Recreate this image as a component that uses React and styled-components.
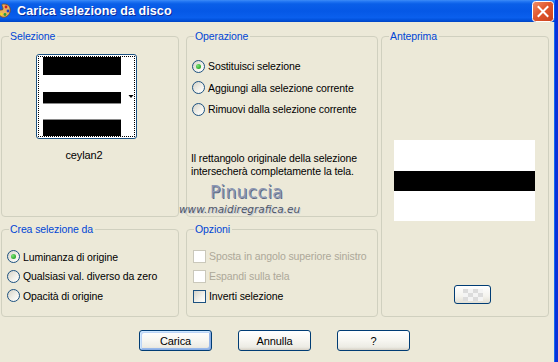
import React from 'react';
import styled, { createGlobalStyle, css } from 'styled-components';

const Global = createGlobalStyle`
  html, body { margin: 0; padding: 0; background: #ECE9D8; }
  body { font-family: "Liberation Sans", Arial, sans-serif; font-size: 10.5px; letter-spacing: -0.1px; color: #000; }
  * { box-sizing: border-box; }
`;

const Window = styled.div`
  position: relative;
  width: 558px;
  height: 362px;
  background: #ECE9D8;
  border-right: 3px solid #0831D9;
  box-shadow: inset -1px 0 0 #166AEE;
  display: flex;
  flex-direction: column;
  overflow: hidden;
`;

const TitleBar = styled.div`
  height: 22px;
  flex: none;
  display: flex;
  align-items: center;
  background: linear-gradient(to bottom, #3D8CF7 0%, #1F73F2 8%, #0A5FE8 18%, #0558E6 50%, #0A5FED 80%, #0050DA 92%, #0044C4 100%);
`;

const TitleIcon = styled.svg`
  flex: none;
  width: 14px;
  height: 16px;
  margin-left: -3px;
`;

const TitleText = styled.div`
  margin-left: 6px;
  font-family: "Liberation Sans", Arial, sans-serif;
  font-weight: bold;
  font-size: 12.5px;
  letter-spacing: 0.1px;
  color: #fff;
  text-shadow: 1px 1px 0 #0A2A9A;
`;

const CloseButton = styled.svg`
  flex: none;
  display: block;
  margin-left: auto;
  margin-right: 1px;
  width: 22px;
  height: 21px;
`;

const Body = styled.div`
  flex: 1;
  display: flex;
  flex-direction: column;
  padding: 14px 0 0 1px;
`;

const Grid = styled.div`
  display: grid;
  grid-template-columns: 182px 192px 168px;
  grid-template-rows: 181px 88px;
  column-gap: 3px;
  row-gap: 12px;
`;

const Group = styled.div`
  position: relative;
  border: 1px solid #D0D0BF;
  border-radius: 4px;
  width: ${p => p.$w}px;
  grid-column: ${p => p.$col};
  grid-row: ${p => p.$row};
  display: flex;
  flex-direction: column;
  align-items: flex-start;
  padding: ${p => p.$pad || '0'};
`;

const Legend = styled.div`
  position: absolute;
  top: -7px;
  left: 7px;
  padding: 0 2px 0 1px;
  line-height: 13px;
  background: #ECE9D8;
  color: #0046D5;
`;

const ThumbCol = styled.div`
  display: flex;
  flex-direction: column;
  align-items: center;
  width: 101px;
`;

const Thumb = styled.div`
  position: relative;
  width: 101px;
  height: 85px;
  border: 1px solid #1C5180;
  border-radius: 3px;
  background: #fff;
`;

const FocusRect = styled.div`
  position: absolute;
  inset: 1px;
  border: 1px dotted #000;
`;

const ThumbName = styled.div`
  margin-top: 10px;
  margin-right: 5px;
  font-size: 11px;
  line-height: 13px;
`;

const RadioList = styled.div`
  display: flex;
  flex-direction: column;
  margin-top: ${p => p.$top}px;
`;

const Row = styled.div`
  display: flex;
  align-items: center;
  height: ${p => p.$h}px;
  gap: 3px;
  color: ${p => (p.$disabled ? '#ACA899' : '#000')};
  white-space: nowrap;
`;

const RadioDot = styled.span`
  position: relative;
  flex: none;
  width: 13px;
  height: 13px;
  border-radius: 50%;
  border: 1px solid #1C5180;
  background: linear-gradient(135deg, #D6D3C8 0%, #F3F2EC 60%, #FFFFFF 100%);
  ${p => p.$on && css`
    &::after {
      content: '';
      position: absolute;
      left: 3px;
      top: 3px;
      width: 5px;
      height: 5px;
      border-radius: 50%;
      background: radial-gradient(circle at 35% 35%, #7BE477 0%, #21A121 80%);
    }
  `}
`;

const CheckBox = styled.span`
  flex: none;
  width: 13px;
  height: 13px;
  border: 1px solid ${p => (p.$disabled ? '#CAC8BB' : '#1C5180')};
  background: ${p => (p.$disabled ? '#FFFFFF' : 'linear-gradient(135deg, #D6D3C8 0%, #F3F2EC 60%, #FFFFFF 100%)')};
`;

const Note = styled.div`
  margin-top: 32px;
  margin-left: -1px;
  line-height: 12.5px;
`;

const Preview = styled.div`
  margin-top: 103px;
  margin-left: 12px;
  width: 141px;
  height: 81px;
  background: #fff;
  display: flex;
  flex-direction: column;
  padding-top: 31px;
`;

const PreviewBand = styled.div`
  height: 20px;
  background: #000;
`;

const SmallButton = styled.div`
  margin-top: 64px;
  margin-left: 72px;
  width: 37px;
  height: 19px;
  border: 1px solid #003C74;
  border-radius: 3px;
  background: linear-gradient(to bottom, #FFFFFF 0%, #F4F3EE 60%, #E2DFD4 100%);
  display: flex;
  align-items: center;
  justify-content: center;
`;

const Footer = styled.div`
  display: flex;
  justify-content: center;
  gap: 26px;
  margin-top: 13px;
  padding-right: 7px;
`;

const Button = styled.div`
  width: 73px;
  height: 21px;
  border: 1px solid #003C74;
  border-radius: 3px;
  font-size: 11px;
  background: linear-gradient(to bottom, #FFFFFF 0%, #F7F6F1 50%, #ECEBE4 85%, #D6D0C5 100%);
  display: flex;
  align-items: center;
  justify-content: center;
  ${p => p.$default && css`
    box-shadow: inset 1px 1px 0 #CEE7FF, inset -1px -1px 0 #89ADE4, inset 2px 2px 0 #BCD4F6, inset -2px -2px 0 #98B8EA;
  `}
`;

const Watermark = styled.div`
  position: absolute;
  left: 179px;
  top: 181px;
  display: flex;
  flex-direction: column;
  align-items: flex-start;
  pointer-events: none;
`;

const WmName = styled.div`
  margin-left: 31px;
  font-family: "DejaVu Sans", Verdana, sans-serif;
  font-size: 17px;
  line-height: 22px;
  letter-spacing: 0.4px;
  color: #8C98B4;
  text-shadow: 1px 1px 0 #5E6A86;
`;

const WmSite = styled.div`
  font-family: "DejaVu Sans", Verdana, sans-serif;
  font-style: italic;
  font-size: 10.5px;
  line-height: 12px;
  letter-spacing: 0;
  color: #4E5668;
  text-shadow: 1px 1px 0 #C8CCD6;
`;

function Radio({ on, label, h }) {
  return (
    <Row $h={h}>
      <RadioDot $on={on} />
      <span>{label}</span>
    </Row>
  );
}

function Check({ disabled, label }) {
  return (
    <Row $h={20} $disabled={disabled}>
      <CheckBox $disabled={disabled} />
      <span>{label}</span>
    </Row>
  );
}

export default function App() {
  return (
    <>
      <Global />
      <Window>
        <TitleBar>
          <TitleIcon viewBox="0 0 14 16">
            <path d="M7 1 C12 1 14 5 13 9 C12 13 8 15 5 14 C2 13 1 10 2 8 C3 6 6 8 6 6 C6 3 3 1 7 1 Z" fill="#E8B060" stroke="#7A4A18" strokeWidth="0.8" />
            <circle cx="9" cy="4" r="1.4" fill="#D02020" />
            <circle cx="11" cy="8" r="1.4" fill="#2040D0" />
            <circle cx="8" cy="11.5" r="1.4" fill="#20A040" />
            <circle cx="4.5" cy="11" r="1.2" fill="#F0E020" />
          </TitleIcon>
          <TitleText>Carica selezione da disco</TitleText>
          <CloseButton viewBox="0 0 22 21">
            <defs>
              <linearGradient id="closeFill" x1="0" y1="0" x2="1" y2="1">
                <stop offset="0" stopColor="#F0906C" />
                <stop offset="0.45" stopColor="#E2582E" />
                <stop offset="1" stopColor="#C8401C" />
              </linearGradient>
            </defs>
            <rect x="0.5" y="0.5" width="21" height="20" rx="3" fill="url(#closeFill)" stroke="#FFFFFF" strokeWidth="1" />
            <path d="M6.5 6 L15.5 15 M15.5 6 L6.5 15" stroke="#FFFFFF" strokeWidth="2" strokeLinecap="square" />
          </CloseButton>
        </TitleBar>
        <Body>
          <Grid>
            <Group $w={178} $col={1} $row={1} $pad="17px 0 0 34px">
              <Legend>Selezione</Legend>
              <ThumbCol>
                <Thumb>
                  <svg width="99" height="83" viewBox="0 0 99 83" style={{ display: 'block' }}>
                    <rect x="6" y="2" width="78" height="18" fill="#000" />
                    <rect x="6" y="37" width="78" height="11" fill="#000" />
                    <rect x="6" y="48" width="78" height="1" fill="#8A8A8A" />
                    <rect x="6" y="64" width="78" height="1" fill="#8A8A8A" />
                    <rect x="6" y="65" width="78" height="16" fill="#000" />
                    <path d="M91.5 40 L96.5 40 L94 43 Z" fill="#000" />
                  </svg>
                  <FocusRect />
                </Thumb>
                <ThumbName>ceylan2</ThumbName>
              </ThumbCol>
            </Group>

            <Group $w={192} $col={2} $row={1} $pad="0 0 0 5px">
              <Legend>Operazione</Legend>
              <RadioList $top={18.5}>
                <Radio on h={21.5} label="Sostituisci selezione" />
                <Radio h={21.5} label="Aggiungi alla selezione corrente" />
                <Radio h={21.5} label="Rimuovi dalla selezione corrente" />
              </RadioList>
              <Note>
                Il rettangolo originale della selezione<br />
                intersecherà completamente la tela.
              </Note>
            </Group>

            <Group $w={168} $col={3} $row="1 / span 2">
              <Legend>Anteprima</Legend>
              <Preview>
                <PreviewBand />
              </Preview>
              <SmallButton>
                <svg width="20" height="12" viewBox="0 0 20 12">
                  <rect x="0" y="0" width="20" height="12" fill="#F4F4F4" />
                  <rect x="0" y="0" width="5" height="4" fill="#DCDCDC" />
                  <rect x="10" y="0" width="5" height="4" fill="#DCDCDC" />
                  <rect x="5" y="4" width="5" height="4" fill="#DCDCDC" />
                  <rect x="15" y="4" width="5" height="4" fill="#DCDCDC" />
                  <rect x="0" y="8" width="5" height="4" fill="#DCDCDC" />
                  <rect x="10" y="8" width="5" height="4" fill="#DCDCDC" />
                </svg>
              </SmallButton>
            </Group>

            <Group $w={178} $col={1} $row={2} $pad="0 0 0 5px">
              <Legend>Crea selezione da</Legend>
              <RadioList $top={17}>
                <Radio on h={19.5} label="Luminanza di origine" />
                <Radio h={19.5} label="Qualsiasi val. diverso da zero" />
                <Radio h={19.5} label="Opacità di origine" />
              </RadioList>
            </Group>

            <Group $w={192} $col={2} $row={2} $pad="0 0 0 6px">
              <Legend>Opzioni</Legend>
              <RadioList $top={16}>
                <Check disabled label="Sposta in angolo superiore sinistro" />
                <Check disabled label="Espandi sulla tela" />
                <Check label="Inverti selezione" />
              </RadioList>
            </Group>
          </Grid>
          <Footer>
            <Button $default>Carica</Button>
            <Button>Annulla</Button>
            <Button>?</Button>
          </Footer>
        </Body>
        <Watermark>
          <WmName>Pinuccia</WmName>
          <WmSite>www.maidiregrafica.eu</WmSite>
        </Watermark>
      </Window>
    </>
  );
}
